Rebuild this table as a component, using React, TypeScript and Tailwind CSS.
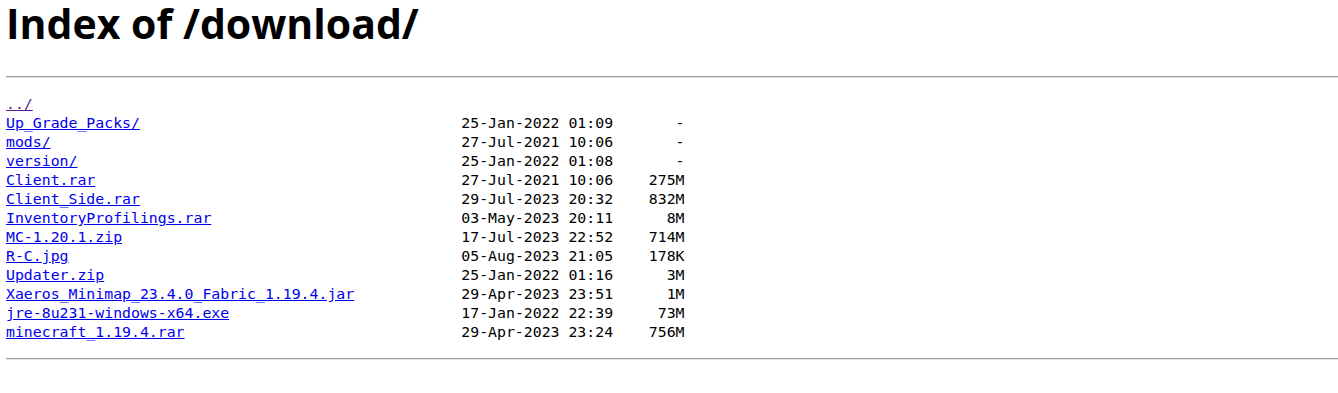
const rows: { name: string; date: string; size: string; visited?: boolean }[] = [
  { name: "Up_Grade_Packs/", date: "25-Jan-2022 01:09", size: "-" },
  { name: "mods/", date: "27-Jul-2021 10:06", size: "-" },
  { name: "version/", date: "25-Jan-2022 01:08", size: "-" },
  { name: "Client.rar", date: "27-Jul-2021 10:06", size: "275M" },
  { name: "Client_Side.rar", date: "29-Jul-2023 20:32", size: "832M" },
  { name: "InventoryProfilings.rar", date: "03-May-2023 20:11", size: "8M" },
  { name: "MC-1.20.1.zip", date: "17-Jul-2023 22:52", size: "714M" },
  { name: "R-C.jpg", date: "05-Aug-2023 21:05", size: "178K" },
  { name: "Updater.zip", date: "25-Jan-2022 01:16", size: "3M" },
  { name: "Xaeros_Minimap_23.4.0_Fabric_1.19.4.jar", date: "29-Apr-2023 23:51", size: "1M" },
  { name: "jre-8u231-windows-x64.exe", date: "17-Jan-2022 22:39", size: "73M" },
  { name: "minecraft_1.19.4.rar", date: "29-Apr-2023 23:24", size: "756M" },
];

export default function App() {
  return (
    <div className="min-h-[393px] bg-white pl-[6px] text-black">
      <h1
        className="pt-[1px] text-[41px] font-bold leading-[44px]"
        style={{ fontFamily: '"Open Sans", "Noto Sans", sans-serif' }}
      >
        Index of /download/
      </h1>
      <hr className="mt-[31px] border-0 border-t border-t-[#9a9a9a] border-b border-b-[#e6e6e6]" />
      <pre
        className="mt-[16px] text-[14.83px] leading-[19px] whitespace-pre"
        style={{ fontFamily: '"DejaVu Sans Mono", "Liberation Mono", monospace' }}
      >
        <div>
          <a href="#" className="text-[#551a8b] underline">
            ../
          </a>
        </div>
        {rows.map((r) => (
          <div key={r.name}>
            <a href="#" className="text-[#0000ee] underline">
              {r.name}
            </a>
            {" ".repeat(51 - r.name.length)}
            {r.date}
            {r.size.padStart(8, " ")}
          </div>
        ))}
      </pre>
      <hr className="mt-[17px] border-0 border-t border-t-[#9a9a9a] border-b border-b-[#e6e6e6]" />
    </div>
  );
}
